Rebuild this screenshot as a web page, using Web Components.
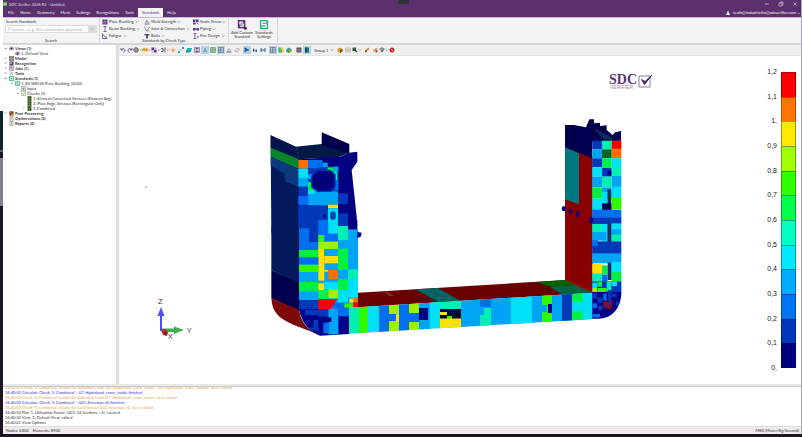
<!DOCTYPE html>
<html lang="en">
<head>
<meta charset="utf-8">
<title>SDC Verifier</title>
<style>
html,body{height:100%;margin:0}
body{font:4px/5px Lato,"Open Sans",sans-serif;color:#333;background:#fff;overflow:hidden}
</style>
</head>
<body>
<sdc-app></sdc-app>
<script>
const define=(name,css,html,setup)=>customElements.define(name,class extends HTMLElement{
  constructor(){
    super();
    const root=this.attachShadow({mode:'open'});
    root.innerHTML=`<style>*{box-sizing:border-box}button,input,select{font:inherit;color:inherit;border:0;padding:0;margin:0;background:none}${css}</style>${typeof html==='function'?html(this):html}`;
    if(setup)setup(root,this);
  }
});

/* ---------- icons, each on a 12 x 12 grid ---------- */
const ICONS={
  undo:'<path d="M2 2v4h4M2.500 5.500C5 2 10 3 10 7c0 2-1 3-3 4" fill="none" stroke="#5b3a6e" stroke-width="1.500"/>',
  redo:'<path d="M10 2v4H6M9.500 5.500C7 2 2 3 2 7c0 2 1 3 3 4" fill="none" stroke="#5b3a6e" stroke-width="1.500"/>',
  globe:'<circle cx="6" cy="6" r="4.500" fill="#ccc" stroke="#444" stroke-width="1.500"/><path d="M1 6h10M6 1v10" stroke="#444"/>',
  ruler:'<path d="M0 3h12v6H0z" fill="#e9b23a"/><path d="M3 3v3M6 3v3M9 3v3" stroke="#8a6410"/>',
  pattern:'<path d="M1 1h5v5H1zM6 6h5v5H6z" fill="#5b3a7e"/><path d="M6 1h5v5H6zM1 6h5v5H1z" fill="#c9b9d8"/>',
  axis:'<path d="M2 3h4v6H2M6 6h3M10 1v10" fill="none" stroke="#444" stroke-width="1.500"/>',
  plus:'<path d="M6 1v10M1 6h10" stroke="#f09a2a" stroke-width="2"/>',
  line:'<path d="M2 10 10 2" stroke="#5ab0d0" stroke-width="1.500"/><path d="M0 8h4v4H0zM8 0h4v4H8z" fill="#17b5c4"/>',
  plate:'<path d="M3 2h9l-2 8H0z" fill="#12b6c8"/><path d="M1 7h6v4H0z" fill="#14913f"/>',
  beam:'<path d="M1 1h10v10H1z" fill="#ddd3e8" stroke="#5b3a7e"/><path d="M3 3h6M6 3v6M3 9h6" stroke="#5b3a7e" stroke-width="1.500"/>',
  nodes:'<path d="M6 2v5L2 10M6 7l4 3" fill="none" stroke="#2c6f9a" stroke-width="1.500"/>',
  mesh:'<path d="M1 1h10v10H1z" fill="#d9ecd9" stroke="#3b7a3b"/><path d="M1 4.300h10M1 7.700h10M4.300 1v10M7.700 1v10" stroke="#3b7a3b"/>',
  rows:'<path d="M1 1h10v10H1z" fill="#cfe0ee" stroke="#39536e"/><path d="M1 4.300h10M1 7.700h10M5 1v10" stroke="#39536e"/>',
  tri:'<path d="M6 3 10 9H2z" fill="#e9e2ee" stroke="#6b5a7a"/><path d="M1 11h10" stroke="#6b5a7a"/>',
  eraser:'<path d="m1 8 6-5 4 1-5 6z" fill="#eee" stroke="#777"/>',
  flag:'<path d="M2 1v10M2 2l8 4-8 3z" fill="#1c6db3" stroke="#174a7a"/>',
  flag2:'<path d="M2 2v8l4-3z" fill="#5b3a7e"/><path d="M7 5h3v5H7z" fill="#1c6db3"/>',
  h:'<path d="M2 2v8M10 2v8M2 6h8" stroke="#2c5f8a" stroke-width="2"/>',
  contour:'<path d="M1 1h10v10H1z" fill="#f0d020"/><path d="M1 1h4v10H1z" fill="#25a9c9"/><path d="M5 5h3v6H5z" fill="#39b54a"/>',
  contour2:'<path d="m1 4 5-3 5 3v5l-5 3-5-3z" fill="#27a0c0"/><path d="m6 6 5-2v5l-5 3z" fill="#e88c1c"/><path d="m1 4 5 2v6L1 9z" fill="#2aa54a"/>',
  block:'<path d="M1 1h10v10H1z" fill="#555"/><path d="M1 6h10M6 1v10" stroke="#aaa"/>',
  part:'<path d="M2 1h8v10H2z" fill="#1d7a8c"/><path d="M2 1h3v10H2z" fill="#173b52"/>',
  box:'<path d="m1 4 5-3 5 3v5l-5 3-5-3z" fill="#d8981c"/><path d="m6 6 5-2v5l-5 3z" fill="#7a4f08"/>',
  note:'<path d="M1 2h10v8H1z" fill="#f4efdc" stroke="#888"/><path d="M3 5h6M3 7h6" stroke="#999"/>',
  select:'<path d="M1 1h7v7H1z" fill="#355c3a"/><path d="m6 6 5 2-3 3z" fill="#222"/>',
  brush:'<path d="m2 11 1-5 6-5 2 3-6 5z" fill="#e08a2a"/><path d="m2 11 1-5 3 3z" fill="#8b3c1a"/>',
  brush2:'<path d="m2 11 1-5 6-5 2 3-6 5z" fill="#c9a06a"/><path d="M7 6h4v5H7z" fill="#d4442a"/>',
  layers:'<path d="m1 4 5-3 5 3-5 3z" fill="#999" stroke="#555"/><path d="m3 7 3 4 4-4" fill="#555"/>',
  stop:'<circle cx="6" cy="6" r="5" fill="#cf2f2f"/><path d="m3 3 6 6" stroke="#fff"/>',
  eye:'<path d="M0 6c3-5 9-5 12 0-3 5-9 5-12 0z" fill="#b9a8cc" stroke="#5b3a7e"/><circle cx="6" cy="6" r="2" fill="#40235c"/>',
  model:'<path d="M1 1h10v10H1z" fill="#777" stroke="#333"/><path d="M1 6h10M6 1v10" stroke="#ddd"/>',
  recog:'<path d="M1 1h10v10H1z" fill="#56506e"/><path d="M3 3h4v4H3z" fill="#b8a8dc"/>',
  job:'<path d="M1 1h10v10H1z" fill="#ece4f4" stroke="#5b3a7e"/><path d="M3 4h6M3 7h6" stroke="#5b3a7e" stroke-width="1.500"/>',
  tools:'<path d="m2 10 7-7M3 2l7 8" stroke="#777" stroke-width="1.500"/>',
  std:'<path d="M1 1h10v10H1z" fill="#e4faf0" stroke="#26b57c" stroke-width="2"/><path d="M8 4H4v2h4v2H4" fill="none" stroke="#26b57c"/>',
  input:'<path d="M1 1h10v10H1z" fill="#eee" stroke="#555"/><path d="M4 4h4v5H4z" fill="#888"/>',
  check:'<path d="M1 1h10v10H1z" fill="#fff" stroke="#5a8a4a"/><path d="m3 6 2 3 4-6" fill="none" stroke="#4c9a3a" stroke-width="1.500"/>',
  calc:'<path d="M1 0h10v12H1z" fill="#66884a"/><path d="M3 2h6v2H3zM3 6h2v4H3zM7 6h2v4H7z" fill="#273b1c"/>',
  post:'<path d="M1 1h10v10H1z" fill="#5b3a2e"/><path d="M1 1h5v5H1z" fill="#e8542a"/><path d="M6 6h5v5H6z" fill="#e9b23a"/>',
  doc:'<path d="M2 1h8v10H2z" fill="#f3f3e8" stroke="#666"/><path d="M4 4h4M4 6h4M4 8h4" stroke="#777"/>',
  platebk:'<path d="M1 1h10v10H1z" fill="#5b3a8e"/><path d="M1 6h10M6 1v10" stroke="#c8b4e0"/>',
  beambk:'<path d="M3 1h6M6 1v10M3 11h6" stroke="#5b3a8e" stroke-width="1.500"/>',
  fatigue:'<path d="M1 1v10h10M3 3c1 4 3 5 7 6" fill="none" stroke="#5b3a8e" stroke-width="1.500"/>',
  weld:'<path d="M1 10h10M3 8l3-5 3 5" fill="none" stroke="#5b3a8e" stroke-width="1.500"/>',
  joint:'<path d="m1 2 4 8h6M11 2 6 9" fill="none" stroke="#6b6b7e" stroke-width="1.500"/>',
  bolts:'<path d="M1 2h10v3H8v6H4V5H1z" fill="#5c5668"/>',
  stress:'<path d="M0 1h5v5H0zM6 1h5v5H6zM0 7h5v4H0z" fill="#5b3a8e"/><path d="m7 7 4 4" stroke="#5b3a8e" stroke-width="1.500"/>',
  piping:'<path d="M0 4h5v5H0zM7 4h5v5H7z" fill="#5b3a8e"/><path d="M3 6h6" stroke="#5b3a8e" stroke-width="2"/>',
  fire:'<path d="M1 1h6M4 1v10M1 11h6" stroke="#5b3a8e" stroke-width="1.500"/><path d="m8 9 2-4 2 4z" fill="#5b3a8e"/>',
  bigA:'<path d="M1 0h9v10H1z" fill="#5b2e7c"/><path d="M7.500 2.500h-4v2.300h4v2.500h-4" fill="none" stroke="#fff" stroke-width="1.300"/><circle cx="10" cy="10" r="1.800" fill="#3a2450"/>',
  bigB:'<path d="M1 0h10v11H1z" fill="#33bf8c"/><path d="M8.500 2.500h-5v3h5v3h-5" fill="none" stroke="#fff" stroke-width="1.400"/>',
  find:'<circle cx="7" cy="5" r="3.500" fill="none" stroke="#888"/><path d="m4 8-3 3" stroke="#888"/>',
  user:'<path d="M4 1h4v5l3 2v4H1V8l3-2z" fill="#fff"/>',
  app:'<path d="M0 0h12v12H0z" fill="#57b947"/><path d="m3 6 2 3 5-6" fill="none" stroke="#fff" stroke-width="2"/>',
  min:'<path d="M2 6h8" stroke="#cbbdd6" stroke-width="1.500"/>',
  max:'<path d="M2 4h6v6H2zM4 4V2h6v6H8" fill="none" stroke="#cbbdd6" stroke-width="1.500"/>',
  close:'<path d="m3 3 6 6M9 3 3 9" stroke="#cbbdd6" stroke-width="1.500"/>',
  down:'<path d="m2 4 4 4 4-4" fill="none" stroke="#666" stroke-width="1.500"/>'
};
define('sdc-icon',':host{display:block;width:6px;height:6px;flex:none}:host([size="s"]){width:4px;height:4px}:host([size="l"]){width:10px;height:10px}svg{display:block;width:100%;height:100%}',
  el=>`<svg viewBox="0 0 12 12" aria-hidden="true">${ICONS[el.getAttribute('name')]||''}</svg>`);

/* ---------- title bar and menu ---------- */
define('sdc-header',`
:host{display:block;background:#5a306e;color:#e6dcec;border-bottom:1px solid #cdb6d8;position:relative}
.title{display:flex;align-items:center;height:8px;gap:2px}
.title span{flex:1}
.win{display:flex;gap:8px;padding-right:3px}
.win button,.user{display:flex;align-items:center}
.notch{position:absolute;left:50%;top:0;width:11px;height:4px;margin-left:-4px;background:#333}
.menu{display:flex;height:9px;align-items:stretch;padding-left:2px}
nav{display:flex;flex:1}
nav button{padding:0 3px;color:#f4eef8}
nav button[aria-current]{background:#f3f3f3;color:#5a306e;padding:0 4px;margin:0 1px}
.user{gap:3px;color:#fff;padding-right:1px}`,`
<div class="title"><sdc-icon name="app" size="s"></sdc-icon><span>SDC Verifier 2026 R2 - Untitled</span>
<div class="win"><button aria-label="Minimize"><sdc-icon name="min"></sdc-icon></button><button aria-label="Restore"><sdc-icon name="max"></sdc-icon></button><button aria-label="Close"><sdc-icon name="close"></sdc-icon></button></div></div>
<div class="notch"></div>
<div class="menu"><nav>${['File','Home','Geometry','Mesh','Settings','Recognitions','Tools','Standards','Help'].map(t=>`<button${t==='Standards'?' aria-current="page"':''}>${t}</button>`).join('')}</nav>
<button class="user"><sdc-icon name="user" size="s"></sdc-icon>realis@industrielist@sdcverifier.com ⌄</button></div>`);

/* ---------- ribbon ---------- */
define('sdc-group',':host{display:flex;flex-direction:column;border-right:1px solid #d9d5dc;padding:0 2px}.body{flex:1;min-height:0}.cap{text-align:center;height:4px;line-height:4px}',
  el=>`<div class="body"><slot></slot></div><div class="cap">${el.getAttribute('caption')||''}</div>`);
define('sdc-command',`:host{display:block}button{display:flex;align-items:center;gap:1px;height:7px;white-space:nowrap}
:host([big]) button{flex-direction:column;height:auto;text-align:center;line-height:4px;white-space:normal;width:22px;padding-top:2px}`,
  el=>`<button><sdc-icon name="${el.getAttribute('icon')}"${el.hasAttribute('big')?' size="l"':''}></sdc-icon><span><slot></slot></span>${el.hasAttribute('big')?'':'<sdc-icon name="down" size="s"></sdc-icon>'}</button>`);
define('sdc-ribbon',`
:host{display:flex;background:#f3f3f3;height:27px;border-bottom:2px solid #d6d6d6}
label{display:block;height:7px;line-height:7px;padding-left:1px}
.find{display:flex;width:92px;height:8px;background:#fff;border:1px solid #ddd;align-items:center}
.find sdc-icon{margin:0 1px}
input{flex:1;min-width:0;height:6px;outline:0}input::placeholder{color:#aaa;opacity:1}
.find button{width:8px;height:6px;background:#ddd;display:grid;place-items:center}
.cols{display:grid;grid-template-columns:42px 49px 33px}
.big{display:flex}`,`
<sdc-group caption="Search"><label for="q">Search Standards</label><div class="find"><sdc-icon name="find" size="s"></sdc-icon><input id="q" placeholder="Search... (e.g. ISO, connection, Australia)"><button aria-label="Show list"><sdc-icon name="down" size="s"></sdc-icon></button></div></sdc-group>
<sdc-group caption="Standards by Check Type"><div class="cols">
${[['platebk','Plate Buckling'],['weld','Weld Strength'],['stress','Static Stress'],['beambk','Beam Buckling'],['joint','Joint &amp; Connection'],['piping','Piping'],['fatigue','Fatigue'],['bolts','Bolts'],['fire','Fire Design']].map(c=>`<sdc-command icon="${c[0]}">${c[1]}</sdc-command>`).join('')}
</div></sdc-group>
<sdc-group><div class="big"><sdc-command big icon="bigA">Add Custom Standard</sdc-command><sdc-command big icon="bigB">Standards Settings</sdc-command></div></sdc-group>`);

/* ---------- view toolbar ---------- */
define('sdc-toolbar',`
:host{display:flex;align-items:center;height:11px;background:#f0f0f0;border-bottom:1px solid #e2e2e2}
button{display:flex;align-items:center;justify-content:center;width:8px;height:8px;flex:none}
button.n{width:7px}
button.d{width:9px}
button.on{background:#b4d4e6}
i{width:2px;flex:none}
select{appearance:none;width:16px;height:8px;margin-left:3px}
label{display:flex;align-items:center;padding-right:2px}`,()=>{
  const b=(n,c='')=>`<button class="${c}" aria-label="${n}"><sdc-icon name="${n}"></sdc-icon>${c==='d'?'<sdc-icon name="down" size="s"></sdc-icon>':''}</button>`;
  return b('undo','n')+b('redo','n')+b('globe','d')+b('ruler','d')+b('pattern','d')+b('axis','d')+b('plus')+b('line')+b('plate')+b('beam')+b('nodes','on')+b('mesh')+b('rows','on')+b('tri')+b('eraser')+'<i></i>'+b('flag','on')+b('flag2')+b('h')+'<i></i>'+b('rows','on')+b('contour')+b('contour2')+'<i></i>'+b('block')+b('part','on')
  +'<label><select aria-label="Group"><option>Group 1</option></select><sdc-icon name="down" size="s"></sdc-icon></label>'+b('box')+b('note')+b('select','d')+'<i></i>'+b('brush')+b('brush2')+b('layers','d')+b('stop');
});

/* ---------- project tree ---------- */
define('sdc-tree',`
:host{display:block;background:#fff;padding:1px 0 0 2px;width:113px;overflow:hidden}
ul{list-style:none;margin:0;padding:0}ul ul{padding-left:6px}
.row{display:grid;grid-template-columns:3px 5px auto;align-items:center;justify-content:start;column-gap:1px;height:5px;white-space:nowrap}
.b{font-weight:700}.t{font-size:3px;color:#555}
sdc-icon{width:5px;height:5px}`,()=>{
  const T=[['▴','eye','Views (1)',[['','eye','1..Default View']]],['▹','model','Model'],['▹','recog','Recognition'],['▹','job','Jobs (1)'],['▹','tools','Tools'],
    ['▴','std','Standards (1)',[['▴','std','1..BV NR526 Plate Buckling (2020)',[['▹','input','Input'],['▴','check','Checks (3)',[['','calc','1..Element Converted Stresses (Element Avg)'],['','calc','2..Plate Edge Stresses (Rectangular Only)'],['▹','calc','3..Combined']]]]]]],
    ['▹','post','Post-Processing'],['','doc','Optimizations (0)'],['','doc','Reports (0)']];
  const r=(l,d)=>`<ul role="${d?'group':'tree'}">${l.map(([t,i,s,k])=>`<li role="treeitem"><div class="row${d?'':' b'}"><span class="t">${t}</span><sdc-icon name="${i}"></sdc-icon><span>${s}</span></div>${k?r(k,d+1):''}</li>`).join('')}</ul>`;
  return r(T,0);
});

/* ---------- colour legend ---------- */
define('sdc-legend',`
:host{display:grid;grid-template-rows:repeat(12,1fr);font:7px/8px "Liberation Sans",Arial,sans-serif;color:#222}
div{display:grid;grid-template-columns:14px 15px;column-gap:4px;position:relative}
span{height:0;display:flex;align-items:center;justify-content:flex-end}
span:last-child{position:absolute;bottom:0;left:0;width:14px}
b{border:1px solid #0005;border-bottom-width:0}`,()=>{
  const c=['#ff0000','#ff7300','#ffe800','#a0ff00','#30ff00','#00ff48','#00ffc0','#00eaff','#00aaff','#0074f4','#0038bc','#000080'];
  const l=['1,2','1,1','1,','0,9','0,8','0,7','0,6','0,5','0,4','0,3','0,2','0,1'];
  return c.map((k,i)=>`<div><span>${l[i]}</span><b style="background:${k}"></b>${i===11?'<span>0,</span>':''}</div>`).join('');
});

/* ---------- finite element model ---------- */
const PAL={n:'#000080',k:'#00004c',d:'#0038b8',b:'#0070f0',a:'#00a4f4',c:'#00e0f8',t:'#00f0b4',g:'#00f048',G:'#30f800',l:'#a0f000',y:'#ffe000',o:'#f87000',r:'#f80000',s:'#003468',e:'#006428',m:'#880000'};
const cells=s=>s.trim().split(/\s*;\s*/).filter(Boolean).map(q=>{const[c,x,y,w,h]=q.split(/[ ,]+/);return`<rect x="${x}" y="${y}" width="${w}" height="${h}" fill="${PAL[c]}"/>`}).join('');
const poly=(f,p)=>`<path d="M${p}z" fill="${PAL[f]||f}"/>`;
const zone=(x,y,s)=>`<g transform="translate(${x} ${y}) scale(.33333)">${s}</g>`;
const leftTop=zone(250,120,
  poly('#02195c','62 46 137 80 147 118 148 340 64 340')+poly('#04134c','62 46 137 80 147 118 62 83')+poly('#0a8428','62 83 147 118 147 147 62 110')
  +poly('#083a7c','62 110 147 147 147 202 105 184 105 163 62 137')
  +poly('n','145 118 270 110 298 98 322 95 322 125 305 150 320 290 323 340 145 340')
  +poly('#021845','137 80 215 72 298 98 265 112 147 118')+poly('k','215 37 298 72 298 101 215 75')
  +cells(`d 145 120 120 220;b 145 318 60 22;o 145 120 29 26;c 145 146 29 28;b 174 120 44 25;n 218 112 48 28;a 218 128 15 14;d 204 142 30 12;a 145 174 30 26;a 174 163 14 14;g 233 142 18 12;a 251 140 14 14;t 250 154 12 26;b 255 180 10 30;g 174 186 16 26;c 174 210 22 12;a 196 214 68 12;a 174 222 60 34;a 234 222 30 32;d 264 220 30 32;b 145 228 30 26;y 234 254 30 11;c 234 265 30 75;d 264 280 30 38;b 205 300 29 40;t 264 318 30 22;d 145 256 60 38`)
  +'<path d="M202 151h38l15 13v38l-12 12h-40l-18-13v-34z" fill="#000078" stroke="#0038b8" stroke-width="4"/><ellipse cx="249" cy="287" rx="9" ry="13" fill="#0048b0"/><ellipse cx="224" cy="288" rx="4" ry="5" fill="#000080"/>');
const leftLow=zone(250,220,
  poly('#02195c','64 20 148 20 148 192 64 150')+poly('k','64 150 148 190 148 272 64 235')
  +'<path d="M64 235 147 269C153 312 178 334 212 346L130 314C86 296 66 276 64 235z" fill="#7c0808"/>'
  +cells(`a 147 28 177 234;d 147 0 88 26;b 205 0 30 46;c 235 0 30 40;d 264 0 30 18;n 294 0 28 18;b 147 25 30 65;d 177 25 28 42;b 177 67 28 23;G 205 45 18 20;b 223 42 41 23;t 264 18 30 42;l 205 65 59 22;g 147 90 58 22;y 205 87 18 95;a 223 87 41 21;y 223 108 41 22;g 264 86 30 64;b 147 112 58 22;G 147 134 58 22;y 223 150 12 5;o 235 150 29 28;t 294 148 30 30;g 147 186 58 28;y 205 190 18 20;c 223 186 41 22;g 264 178 30 30;c 294 178 30 55;g 205 210 30 27;l 235 208 29 27;c 264 208 30 40;d 147 240 58 32;r 205 238 40 30;b 245 248 53 22;o 310 233 14 14;y 298 236 12 12;G 283 250 27 13;r 310 247 14 15`)
  +poly('n','322 36 335 38 332 50 322 54')
  +'<path d="M147 268H298V342L210 347C178 336 155 310 147 268z" fill="#000088"/>'
  +cells(`d 165 270 40 16;d 190 300 14 22;d 205 268 30 22;b 220 308 14 32;a 235 266 30 77;n 224 292 20 14;b 265 264 33 25;d 177 322 30 10`)
  +poly('r','205 240 262 238 240 267 205 268'));
const deck=poly('#680000','358 292.700 565.300 280 592.700 292.700 358 307.300')+poly('#006464','415 289.300 438 288 460.500 300.800 439 302.200')
  +poly('#006400','536.700 282 565.300 280 575 285 550 286.700')+poly('#006444','550 286.700 575 285 592.700 292.700 562.300 294.500')+poly('#8a3010','384 292 387 291.500 394 296 390 296');
const girder='<g clip-path="url(#strip)">'+cells(`
t 349 290 10 50;G 359 290 10 50;c 368 290 11 50;b 379 290 10 50;l 389 290 10 50;b 389 314 7 7;y 396 315 3 7;b 399 290 10 50;l 409 290 10 50;b 409 313 10 9;a 419 290 11 50;n 419 308 9 12;c 430 290 10 50;t 440 290 21 50;k 440 309 21 10;y 440 312 7 3;G 447 316 5 3;y 440 318.500 21 12;a 461 290 131 50;b 480 290 11 17;t 484 308 7 17;t 480 315 11 12;c 511 290 21 50;G 542 290 10 50;n 548 304 4 9;a 542 305 5 7;d 562 290 10 50;c 572 290 21 50;g 572 290 11 12;g 572 311 11 12`)+'</g>';
const right=zone(590,60,
  poly('m','-75 255 8 290 8 698 -75 660')+poly('#007880','-75 262 -33 280 -33 433 -75 418')
  +poly('k','-75 195 -48 195 -12 202 -2 178 12 178 12 190 30 188 30 198 50 196 50 210 68 225 75 217 93 213 93 242 7 246 7 295 -75 262')
  +poly('#043058','10 204 66 232 66 240 40 236')
  +cells(`d 7 242 29 26;t 36 242 29 26;r 65 242 29 26;a 7 268 29 27;e 36 268 29 27;o 65 266 29 29;d 7 295 29 27;g 36 295 29 29;c 65 295 29 27;c 7 322 29 28;d 36 324 29 26;n 52 332 13 14;t 65 320 29 30;a 7 350 29 32;t 36 350 29 32;a 65 348 29 34;g 7 382 29 34;a 36 382 29 34;s 52 388 12 45;c 65 380 29 34;c 7 416 29 34;c 36 396 16 34;k 36 430 29 20;G 65 414 29 34;b 7 449 87 24;d 7 472 87 20;t 7 492 29 26;c 36 492 16 52;s 52 490 13 56;c 65 490 29 20;a 65 508 29 18;t 65 524 29 20;a 7 516 42 26;b 7 540 16 20;d 7 544 87 38;b 7 540 16 18;a 7 580 87 30;y 7 612 29 28;g 36 616 17 28;s 53 608 12 52;c 65 606 29 32;t 7 640 29 24;b 36 644 17 24;g 65 636 29 28;d 7 664 87 34;g 22 666 14 14;c 7 668 14 14;t 50 664 14 30;c 65 664 16 14;l 7 682 14 14;G 22 684 28 12`)
  +'<path d="M7 696H94C94 744 66 776 25 776H7z" fill="#000088"/>'
  +cells(`d 7 700 14 16;d 22 712 16 16;b 40 700 10 22;b 9 730 12 14;d 24 738 14 12;d 66 700 14 12;d 54 690 10 30;d 78 724 8 12;b 8 762 22 10`)
  +poly('#a00010','40 726 68 720 64 748 40 744')+poly('d','52 744 66 716 60 716 46 744')
  +'<g fill="#000080"><ellipse cx="-79" cy="446" rx="6" ry="8"/><ellipse cx="-58" cy="453" rx="5" ry="7"/><ellipse cx="-37" cy="462" rx="5" ry="9"/><ellipse cx="3" cy="481" rx="6" ry="9"/></g>');
define('sdc-viewport',`
:host{display:block;position:relative;background:#fff;min-height:0;overflow:hidden}
svg{display:block;width:100%;height:100%}
sdc-legend{position:absolute;right:5px;top:16px;bottom:16px}
.ax{font:8px "Open Sans",sans-serif;fill:#333}
.lg{font:bold 14px "Liberation Serif",serif;fill:#56366e}.lv{font:5px "Liberation Sans",sans-serif;fill:#9a88a8}`,`
<svg viewBox="119 56 682 328" preserveAspectRatio="xMidYMid meet" role="img" aria-label="Utilization factor plot">
<defs><clipPath id="strip"><path d="M349 307.800 592.700 292.700V319L349 333.800z"/></clipPath></defs>
${deck}${leftTop}${leftLow}${girder}${right}
<path d="M145.500 186.500h1v1h-1z" fill="#333"/>
<path d="M160 331V316h-2.500l3.500-9 3.500 9H162v15z" fill="#5050e8"/><path d="M162 328.500h12v-2l10 3.500-10 4v-2h-12z" fill="#3fae4f"/><path d="M161 330l4-1 3 3-1 4-4-1z" fill="#b82a2a"/><path d="M163 333l4-1v3z" fill="#701616"/>
<text class="ax" x="158" y="304">Z</text><text class="ax" x="187" y="333">Y</text><text class="ax" x="168" y="339">X</text>
<text class="lg" x="609" y="84">SDC</text><text class="lv" x="610" y="89">VERIFIER</text>
<path d="M639 76h11v11h-11z" fill="none" stroke="#8a7899"/><path d="m641.500 79.500 3 5 7.500-9.500-7 6.500z" fill="#4a2a62" stroke="#4a2a62"/>
</svg><sdc-legend></sdc-legend>`);

/* ---------- log and status ---------- */
define('sdc-log',`
:host{display:flex;flex-direction:column;justify-content:flex-end;height:40px;overflow:hidden;background:#fff;border-top:1px solid #ccc;padding:0 2px 1px;flex:none;white-space:nowrap}
.i{color:#3434d0}.w{color:#eba050}`,()=>[
  ['w',"16:40:50 Check '5..Combined' results for Individual Load 'U6..Hydroload_crane_inside', 'U6..Hydroload_crane_outside' were stored"],
  ['i',"16:40:50 Calculate Check '5..Combined' - U7..Hydroload_crane_inside finished"],
  ['w',"16:40:50 Check '5..Combined' results for Individual Load 'U7..Hydroload_crane_inside' were stored"],
  ['i',"16:40:50 Calculate Check '5..Combined' - U01..Envelope (6) finished"],
  ['w',"16:40:50 Check '5..Combined' results for Load Group 'U01..Envelope (5)' were stored"],
  ['',"16:40:50 Plot '1..Utilization Factor [U01..34 Sections, +5]' created"],
  ['',"16:40:34 View '1..Default View' edited"],
  ['','16:40:41 View Options']].map(([c,t])=>`<div class="${c}">${t}</div>`).join(''));
define('sdc-status',':host{display:flex;justify-content:space-between;align-items:center;height:8px;flex:none;background:#efebeb;padding:0 2px 0 3px;border-top:1px solid #ddd}.l{display:flex;gap:4px}',
  '<div class="l"><span>Nodes: 6404</span><span>Elements: 8900</span></div><span>MKS (Meter/Kg/Second)</span>');

define('sdc-app',`
:host{display:flex;height:100vh;background:#1c1424}
.edge{width:3px;flex:none;background:linear-gradient(#fff 111px,#10242c 111px 150px,#5a5a66 150px 152px,#1a1822 152px 158px,#85808c 158px 206px,#1c1424 206px)}
.win{flex:1;min-width:0;display:flex;flex-direction:column;margin-bottom:3px;border-right:1px solid #a9a0b6;background:#f0f0f0}
.main{flex:1;min-height:0;display:flex}
.side{display:flex;border-right:3px solid #dcdce2}
.view{flex:1;min-width:0;display:flex;flex-direction:column}
sdc-viewport{flex:1}
.gap{height:2px;flex:none;background:#e8e8e8}`,`
<div class="edge"></div><div class="win"><sdc-header></sdc-header><sdc-ribbon></sdc-ribbon>
<div class="main"><div class="side"><sdc-tree></sdc-tree></div><div class="view"><sdc-toolbar></sdc-toolbar><sdc-viewport></sdc-viewport></div></div>
<div class="gap"></div><sdc-log></sdc-log><sdc-status></sdc-status></div>`);
</script>
</body>
</html>
